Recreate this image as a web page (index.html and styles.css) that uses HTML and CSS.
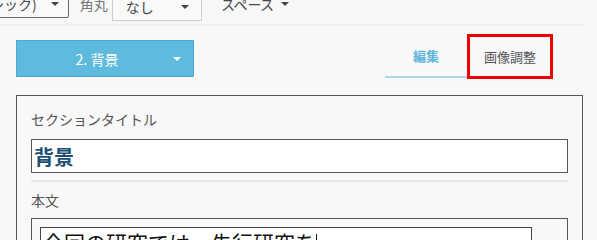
FILE: index.html
```html
<!DOCTYPE html>
<html lang="ja">
<head>
  <meta charset="UTF-8">
  <title>セクション編集</title>
  <link rel="stylesheet" href="styles.css">
</head>
<body>
  <div class="page">
    <div class="toolbar">
      <div class="select select-font">
        <span>ゴシック)</span>
        <span class="caret"></span>
      </div>
      <span class="tool-label">角丸</span>
      <div class="select select-radius">
        <span>なし</span>
        <span class="caret"></span>
      </div>
      <div class="menu-btn">
        <span>スペース</span>
        <span class="caret"></span>
      </div>
    </div>

    <div class="head-row">
      <button class="section-btn">
        <span class="section-name">2. 背景</span>
        <span class="caret caret-white"></span>
      </button>
      <div class="tabs">
        <div class="tab active">編集</div>
        <div class="tab highlight">画像調整</div>
      </div>
    </div>

    <div class="panel">
      <label class="field-label">セクションタイトル</label>
      <input class="title-input" value="背景">
      <hr class="sep">
      <label class="field-label">本文</label>
      <div class="body-box">
        <div class="body-area">今回の研究では、先行研究を<span class="text-caret"></span></div>
        <div class="scroll-hint"></div>
      </div>
    </div>
  </div>
</body>
</html>
```

FILE: styles.css
```css
html, body {
  margin: 0;
  padding: 0;
  background: #f8f8f8;
  font-family: "Noto Sans CJK JP", "Noto Sans", sans-serif;
  overflow: hidden;
}

.page {
  width: 583px;
  height: 240px;
  overflow: hidden;
}

.toolbar {
  display: flex;
  align-items: flex-start;
  height: 24px;
  background: #f7f7f7;
  box-shadow: 0 1px 2px rgba(0, 0, 0, 0.08);
  font-size: 14px;
  color: #444;
  overflow: hidden;
}

.select {
  display: flex;
  align-items: center;
  box-sizing: border-box;
  border: 1px solid #ccc;
  background: #f9f9f9;
}
.select-font {
  margin-top: -12px;
  margin-left: -35px;
  height: 30px;
  padding: 2px 9px 0 10px;
  border-color: #666;
  border-radius: 0 0 2px 0;
  line-height: 20px;
}
.select-font .caret {
  margin-left: 14px;
}
.select-radius {
  justify-content: space-between;
  margin-top: -10px;
  margin-left: 4px;
  width: 90px;
  height: 31px;
  padding: 2px 12px 0 13px;
  color: #444;
}
.tool-label {
  margin-left: 11px;
  margin-top: -6px;
  color: #777;
  line-height: 20px;
}
.menu-btn {
  display: flex;
  align-items: center;
  gap: 8px;
  margin-left: 20px;
  margin-top: -6px;
  line-height: 20px;
  font-feature-settings: "palt";
}

.caret {
  display: inline-block;
  width: 0;
  height: 0;
  border-left: 4px solid transparent;
  border-right: 4px solid transparent;
  border-top: 4px solid #444;
}
.caret-white {
  border-top-color: #fff;
}

.head-row {
  display: flex;
  align-items: flex-start;
  padding: 16px 0 0 16px;
  height: 55px;
}

.section-btn {
  display: flex;
  align-items: center;
  width: 178px;
  height: 37px;
  border: 1px solid #4fa9cf;
  background: #5ebbdd;
  color: #fff;
  font-family: inherit;
  font-size: 14px;
  padding: 0 12px 0 0;
}
.section-name {
  flex: 1;
  text-align: center;
  padding-left: 4px;
}

.tabs {
  display: flex;
  margin-left: 191px;
  margin-top: -6px;
}
.tab {
  box-sizing: border-box;
  height: 45px;
  line-height: 45px;
  text-align: center;
  font-size: 13px;
  color: #555;
}
.tab.active {
  width: 82px;
  color: #5bb6da;
  font-weight: 600;
  border-bottom: 2px solid #a8d8ec;
  height: 44px;
  line-height: 44px;
}
.tab.highlight {
  width: 86px;
  border: 3px solid #f20000;
  line-height: 39px;
}

.panel {
  box-sizing: border-box;
  margin-left: 16px;
  width: 567px;
  height: 145px;
  border: 1px solid #555;
  border-bottom: none;
  padding: 13px 15px 0 14px;
}

.field-label {
  display: block;
  font-size: 14px;
  color: #555;
  line-height: 20px;
}

.title-input {
  display: block;
  box-sizing: border-box;
  width: 537px;
  height: 34px;
  margin-top: 10px;
  border: 1px solid #555;
  background: #fff;
  padding: 0 2px;
  font-family: inherit;
  font-size: 20px;
  font-weight: bold;
  color: #1e4f74;
  outline: none;
}

.sep {
  width: 537px;
  margin: 7px 0 8px;
  border: none;
  border-top: 2px solid #e6e6e6;
}

.body-box {
  position: relative;
  box-sizing: border-box;
  width: 537px;
  height: 36px;
  margin-top: 8px;
  border: 1px solid #555;
  border-bottom: none;
  padding: 8px 0 0 8px;
}
.body-area {
  box-sizing: border-box;
  width: 492px;
  height: 28px;
  border: 1px solid #444;
  border-bottom: none;
  background: #fff;
  padding: 0 2px;
  font-size: 21px;
  line-height: 28px;
  color: #111;
  white-space: nowrap;
  overflow: hidden;
}
.text-caret {
  display: inline-block;
  width: 1px;
  height: 22px;
  background: #111;
  vertical-align: middle;
}
.scroll-hint {
  position: absolute;
  right: 16px;
  bottom: 0;
  width: 8px;
  height: 2px;
  background: #ddd;
}
```
